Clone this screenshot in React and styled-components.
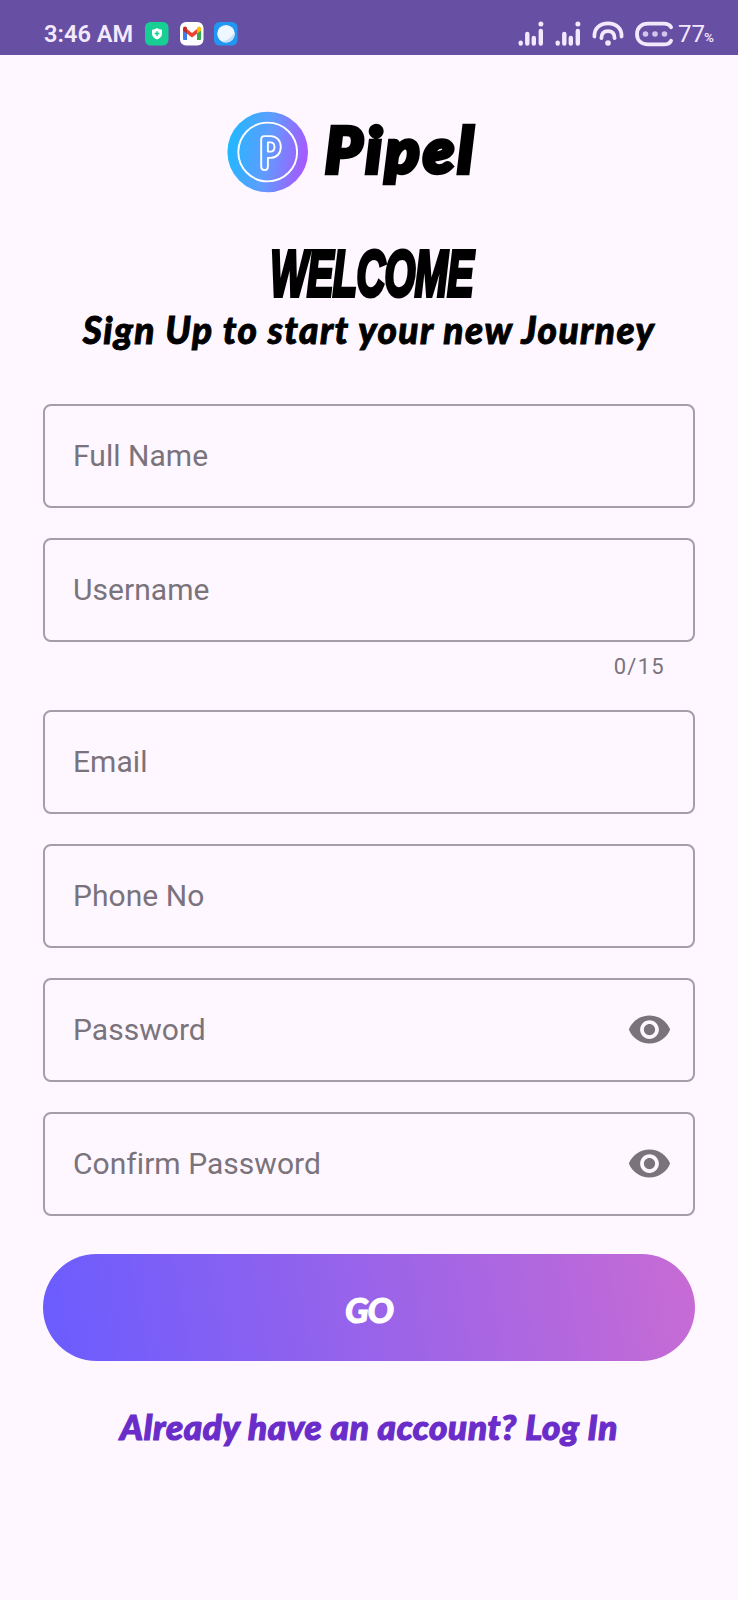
import React from 'react';
import styled, { createGlobalStyle } from 'styled-components';

const GlobalStyle = createGlobalStyle`
  *, *::before, *::after { box-sizing: border-box; }
  body { margin: 0; background: #fef7ff; font-family: Roboto, sans-serif; }
`;

const Screen = styled.div`
  width: 738px;
  height: 1600px;
  display: flex;
  flex-direction: column;
  background: #fef7ff;
  overflow: hidden;
`;

const StatusBar = styled.header`
  height: 54.5px;
  flex: none;
  display: flex;
  align-items: center;
  justify-content: space-between;
  padding: 13px 24px 0 44px;
  background: #674fa3;
  color: #f3e9fd;
`;

const StatusGroup = styled.div`
  display: flex;
  align-items: center;
  gap: ${(p) => p.$gap}px;
  svg { display: block; flex: none; }
`;

const Clock = styled.span`
  width: 91px;
  font-size: 23.6px;
  line-height: 24px;
  font-weight: 600;
  white-space: nowrap;
`;

const BatteryLevel = styled.span`
  display: flex;
  align-items: baseline;
  margin-left: -6px;
  padding-top: 3px;
  font-size: 24px;
  line-height: 24px;
  small { font-size: 13.5px; margin-left: -1px; font-weight: 500; }
`;

const Brand = styled.div`
  display: flex;
  align-items: flex-start;
  height: 82px;
  margin: 56.5px 0 0 227px;
  gap: 16px;
  svg { display: block; flex: none; }
`;

const Script = styled.span`
  display: block;
  white-space: nowrap;
  font-family: Lato, sans-serif;
  font-weight: 900;
  font-style: italic;
  font-size: ${(p) => p.$size}px;
  line-height: ${(p) => p.$line || p.$size}px;
  letter-spacing: ${(p) => p.$spacing || 0}px;
  color: ${(p) => p.$color || '#000'};
  -webkit-text-stroke: ${(p) => p.$stroke || 0}px currentColor;
  stroke-linejoin: round;
`;

const Heading = styled.div`
  display: flex;
  flex-direction: column;
  align-items: center;
  height: 166px;
  margin-top: 44.5px;
`;

const Welcome = styled.h1`
  margin: 0 0 0 6px;
  font-family: 'Liberation Sans Narrow', 'Liberation Sans', sans-serif;
  font-size: 64px;
  line-height: 73px;
  margin-bottom: -1px;
  font-weight: 700;
  font-style: italic;
  letter-spacing: -1px;
  color: #000;
  transform: scaleX(0.62);
  -webkit-text-stroke: 4px #000;
`;

const Form = styled.form`
  display: flex;
  flex-direction: column;
  padding: 0 43px;
`;

const Field = styled.label`
  display: flex;
  align-items: center;
  justify-content: space-between;
  height: 104.6px;
  margin-bottom: ${(p) => (p.$counted ? 0 : 29.5)}px;
  padding: 0 21px 1px 28px;
  border: 2px solid #a59da8;
  border-radius: 8px;
  color: #7a737c;
  font-size: 30px;
  letter-spacing: 0.04px;
  svg { display: block; }
`;

const Counter = styled.div`
  height: 67.4px;
  padding: 12px 30px 0 0;
  text-align: right;
  font-size: 22px;
  line-height: 26px;
  letter-spacing: 1.3px;
  color: #7a737c;
`;

const GoButton = styled.button`
  display: flex;
  align-items: center;
  justify-content: center;
  height: 107px;
  margin: 8px 0 0;
  padding: 4px 0 0;
  border: 0;
  border-radius: 54px;
  background: linear-gradient(80deg, #6a5cff 0%, #c86bd4 100%);
`;

const LoginLink = styled.a`
  display: flex;
  justify-content: center;
  margin-top: 43.5px;
`;

const Signal = () => (
  <svg width="26" height="26" viewBox="0 0 26 26" stroke="#f3e9fd" strokeWidth="4.4" strokeLinecap="round">
    <path d="M2.7 21.6v1M9.3 13v9.6M15.8 17v5.6M22.8 10v12.6" />
    <circle cx="22.9" cy="2.9" r="2.5" fill="#f3e9fd" stroke="none" />
  </svg>
);

const Wifi = () => (
  <svg width="32" height="26" viewBox="0 0 32 26" fill="none" stroke="#f3e9fd" strokeWidth="3.8" strokeLinecap="round">
    <path d="M2.4 15.5C2 7.5 8 2.3 16 2.3S30 7.5 29.6 15.5" />
    <path d="M9.4 17.2C9.2 12.6 12 10.1 16 10.1s6.8 2.5 6.6 7.1" />
    <circle cx="16" cy="22" r="2.8" fill="#f3e9fd" stroke="none" />
  </svg>
);

const Battery = () => (
  <svg width="38" height="26" viewBox="0 0 38 26" fill="none">
    <path d="M36 6.2C34.5 3.2 31.8 2.6 29 2.6H13C6 2.6 2 7 2 13s4 10.4 11 10.4h16c2.8 0 5.5-.6 7-3.6" stroke="#f3e9fd" strokeWidth="3.8" strokeLinecap="round" />
    <g fill="#d3c4ec"><circle cx="10.5" cy="13" r="2.8" /><circle cx="20" cy="13" r="2.8" /><circle cx="29.5" cy="13" r="2.8" /></g>
  </svg>
);

const ShieldApp = () => (
  <svg width="24" height="24" viewBox="0 0 24 24">
    <rect width="23.5" height="23.5" rx="5.5" fill="#17ce94" />
    <path d="M12 6c2 1.2 3 1.5 5 1.7v4.1c0 2.7-2 4.5-5 5.8-3-1.3-5-3.1-5-5.8V7.7C9 7.5 10 7.2 12 6Z" fill="#fff" />
    <path d="M12 9.2v4.8M9.6 11.6h4.8" stroke="#17ce94" strokeWidth="1.5" />
  </svg>
);

const MailApp = () => (
  <svg width="24" height="24" viewBox="0 0 24 24">
    <rect width="23.5" height="23.5" rx="6" fill="#fff" />
    <path d="M3 8v8.8c0 .8.5 1.3 1.2 1.3H7V10Z" fill="#3f7de8" />
    <path d="M17 10v8.1h2.9c.7 0 1.2-.5 1.2-1.3V8Z" fill="#35a853" />
    <path d="m17 7-5 4-5-4v4.8l5 3.8 5-3.8Z" fill="#e94335" />
    <path d="M3 8.5V7c0-2.3 2-3 3.5-1.8L7 5.6v6L3 8.7Z" fill="#c32b22" />
    <path d="M21.1 8.5V7c0-2.3-2-3-3.5-1.8l-.6.4v6l4.1-2.9Z" fill="#fbbc05" />
  </svg>
);

const BubbleApp = () => (
  <svg width="24" height="24" viewBox="0 0 24 24">
    <rect width="23.5" height="23.5" rx="5.5" fill="#2196f3" />
    <circle cx="12" cy="11.8" r="8.8" fill="#eef7ff" />
    <path d="M20.8 10.5c.5 8-8 12.5-13.4 8.4 6 .7 9.5-3.7 13.4-8.4Z" fill="#c5dcf5" />
  </svg>
);

const Logo = () => (
  <svg width="82" height="82" viewBox="0 0 82 82" fill="none">
    <defs>
      <linearGradient id="brand" x1="0" x2="1" y1="0.42" y2="0.58">
        <stop stopColor="#20b9ff" />
        <stop offset="0.5" stopColor="#609bff" />
        <stop offset="1" stopColor="#a956ff" />
      </linearGradient>
    </defs>
    <circle cx="40.7" cy="41" r="40.3" fill="url(#brand)" />
    <g stroke="#fff" strokeWidth="1.9" strokeLinejoin="round">
      <circle cx="40.7" cy="41" r="29.4" />
      <path d="M34.2 28.2c0-2 1.1-3.1 3-3.1h6.3c6.2 0 10.3 4.5 10.3 10.8s-4.1 11-10.3 11h-2.6v8.9c0 2-1.2 3.3-3.3 3.3s-3.4-1.2-3.4-3.3Z" />
      <path d="M40.9 31.4h2.4c2.6 0 4.2 1.8 4.2 4.6s-1.6 4.6-4.2 4.6h-2.4Z" />
    </g>
  </svg>
);

const Eye = () => (
  <svg width="45" height="45" viewBox="0 0 24 24" fill="#7a737c">
    <path d="M12 4.5C7 4.5 2.73 7.61 1 12c1.73 4.39 6 7.5 11 7.5s9.27-3.11 11-7.5c-1.73-4.39-6-7.5-11-7.5zM12 17c-2.76 0-5-2.24-5-5s2.24-5 5-5 5 2.24 5 5-2.24 5-5 5zm0-8c-1.66 0-3 1.34-3 3s1.34 3 3 3 3-1.34 3-3-1.34-3-3-3z" />
  </svg>
);

export default function App() {
  return (
    <Screen>
      <GlobalStyle />
      <StatusBar>
        <StatusGroup $gap={10.3}>
          <Clock>3:46 AM</Clock>
          <ShieldApp />
          <MailApp />
          <BubbleApp />
        </StatusGroup>
        <StatusGroup $gap={11}>
          <Signal />
          <Signal />
          <Wifi />
          <Battery />
          <BatteryLevel>77<small>%</small></BatteryLevel>
        </StatusGroup>
      </StatusBar>
      <Brand>
        <Logo />
        <Script $size={63} $line={75} $stroke={4.5} $spacing={3.7}>Pipel</Script>
      </Brand>
      <Heading>
        <Welcome>WELCOME</Welcome>
        <Script $size={37} $line={40} $stroke={0.9} $spacing={1.45}>Sign Up to start your new Journey</Script>
      </Heading>
      <Form>
        <Field>Full Name</Field>
        <Field $counted>Username</Field>
        <Counter>0/15</Counter>
        <Field>Email</Field>
        <Field>Phone No</Field>
        <Field>Password<Eye /></Field>
        <Field>Confirm Password<Eye /></Field>
        <GoButton type="button"><Script $size={35} $stroke={1} $spacing={-1} $color="#fff">GO</Script></GoButton>
      </Form>
      <LoginLink>
        <Script $size={35} $line={44} $stroke={1.2} $spacing={0.7} $color="#6a2dc9">Already have an account? Log In</Script>
      </LoginLink>
    </Screen>
  );
}
